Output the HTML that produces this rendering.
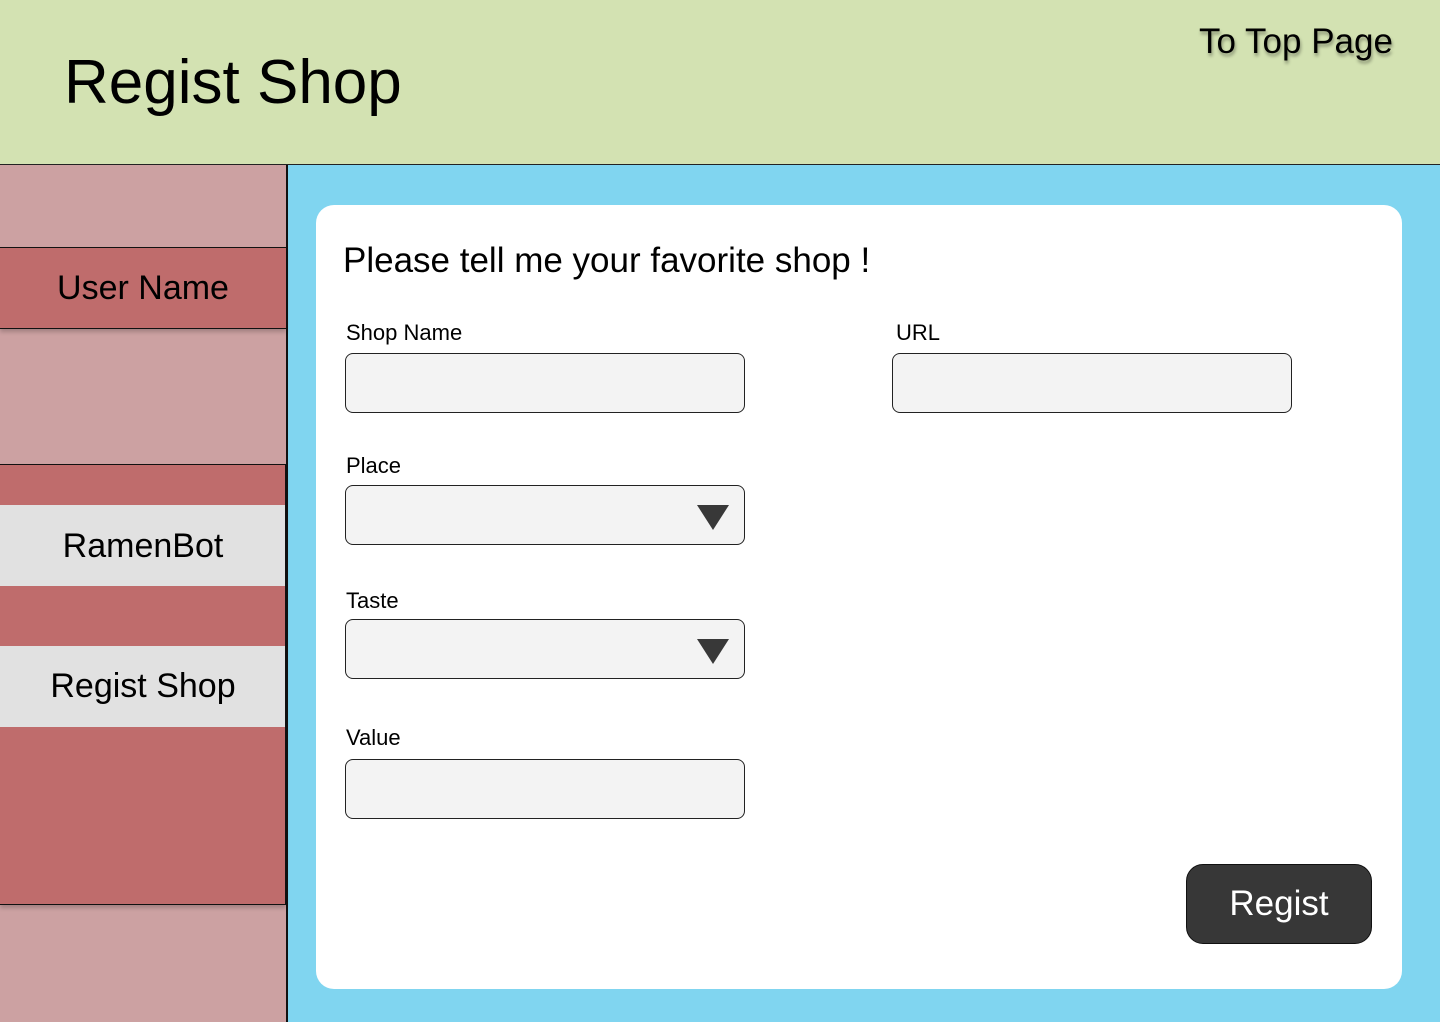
<!DOCTYPE html>
<html><head><meta charset="utf-8"><style>
*{margin:0;padding:0;box-sizing:border-box}
body{width:1440px;height:1022px;overflow:hidden;position:relative;font-family:"Liberation Sans",sans-serif;background:#80d5f0;color:#000}
.a{position:absolute}
.hdr{left:0;top:0;width:1440px;height:165px;background:#d3e2b2;border-bottom:1px solid #222}
.side{left:0;top:165px;width:288px;height:857px;background:#cca1a2;border-right:2px solid #111}
.t{position:absolute;white-space:nowrap}
.inp{position:absolute;width:400px;height:60px;background:#f3f3f3;border:1px solid #222;border-radius:8px}
.lbl{position:absolute;font-size:22px;white-space:nowrap}
.tri{position:absolute;right:15px;top:19px;width:0;height:0;border-left:16px solid transparent;border-right:16px solid transparent;border-top:25px solid #383838}
</style></head><body>
<div class="a hdr">
<div class="t" style="left:64px;top:47px;font-size:62px">Regist Shop</div>
<div class="t" style="left:1199px;top:22px;font-size:35px;text-shadow:1px 3px 3px rgba(0,0,0,.35)">To Top Page</div>
</div>
<div class="a side">
<div class="a" style="left:0;top:82px;width:286px;height:82px;background:#bf6c6c;border-top:1px solid #111;border-bottom:1px solid #111;box-shadow:0 3px 4px rgba(0,0,0,.2)"></div>
<div class="t" style="left:0;top:104px;width:286px;text-align:center;font-size:34px">User Name</div>
<div class="a" style="left:0;top:299px;width:286px;height:441px;background:#bf6c6c;border:1px solid #111;border-left:none;box-shadow:0 3px 4px rgba(0,0,0,.2)"></div>
<div class="a" style="left:0;top:340px;width:285px;height:81px;background:#e1e1e1"></div>
<div class="t" style="left:0;top:362px;width:286px;text-align:center;font-size:34px">RamenBot</div>
<div class="a" style="left:0;top:481px;width:285px;height:81px;background:#e1e1e1"></div>
<div class="t" style="left:0;top:502px;width:286px;text-align:center;font-size:34px">Regist Shop</div>
</div>
<div class="a" style="left:316px;top:205px;width:1086px;height:784px;background:#fff;border-radius:18px">
<div class="t" style="left:27px;top:36px;font-size:35px">Please tell me your favorite shop !</div>
<div class="lbl" style="left:30px;top:115px">Shop Name</div>
<div class="inp" style="left:29px;top:148px"></div>
<div class="lbl" style="left:580px;top:115px">URL</div>
<div class="inp" style="left:576px;top:148px"></div>
<div class="lbl" style="left:30px;top:248px">Place</div>
<div class="inp" style="left:29px;top:280px"><div class="tri"></div></div>
<div class="lbl" style="left:30px;top:383px">Taste</div>
<div class="inp" style="left:29px;top:414px"><div class="tri"></div></div>
<div class="lbl" style="left:30px;top:520px">Value</div>
<div class="inp" style="left:29px;top:554px"></div>
<div class="a" style="left:870px;top:659px;width:186px;height:80px;background:#373737;border:1px solid #111;border-radius:17px;color:#fff;font-size:35px;text-align:center;line-height:78px">Regist</div>
</div>
</body></html>
